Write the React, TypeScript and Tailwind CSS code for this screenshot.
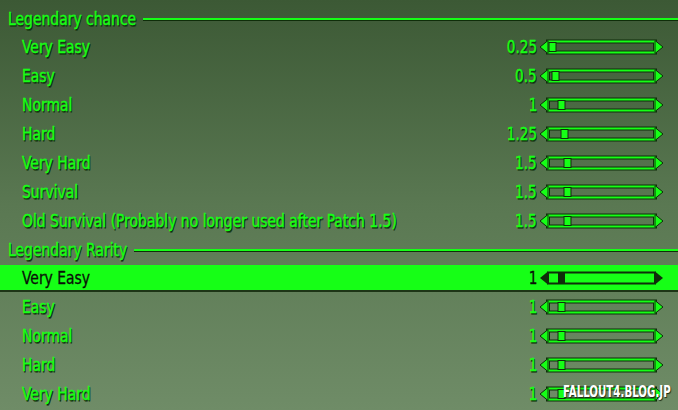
import React from 'react';

const G = '#16ff16';
const D = '#0f2d0a';

const chance: [string, number, string][] = [
  ['Very Easy', 0.25, '0.25'],
  ['Easy', 0.5, '0.5'],
  ['Normal', 1, '1'],
  ['Hard', 1.25, '1.25'],
  ['Very Hard', 1.5, '1.5'],
  ['Survival', 1.5, '1.5'],
  ['Old Survival (Probably no longer used after Patch 1.5)', 1.5, '1.5'],
];

const rarity: [string, number, string][] = [
  ['Very Easy', 1, '1'],
  ['Easy', 1, '1'],
  ['Normal', 1, '1'],
  ['Hard', 1, '1'],
  ['Very Hard', 1, '1'],
];

const Slider: React.FC<{ value: number; active?: boolean }> = ({ value, active }) => {
  const t = 8 + value * 12;
  if (active) {
    return (
      <svg width="130" height="18" viewBox="0 0 130 18" className="shrink-0">
        <polygon points="2,9 10,2.5 10,15.5" fill={D} />
        <rect x="10" y="3.5" width="107" height="11" fill={G} stroke={D} strokeWidth="2" />
        <polygon points="117,2.5 125,9 117,15.5" fill={D} />
        <rect x={t} y="3.5" width="7" height="11" fill={D} />
      </svg>
    );
  }
  return (
    <svg width="130" height="18" viewBox="0 0 130 18" className="shrink-0">
      <rect x="10" y="3.5" width="107" height="11" fill="none" stroke={D} strokeWidth="4" />
      <rect x="10" y="3.5" width="107" height="11" fill="none" stroke={G} strokeWidth="2" />
      <polygon points="2,9 10,2.5 10,15.5" fill={G} stroke={D} strokeWidth="1" />
      <polygon points="117,2.5 125,9 117,15.5" fill={G} stroke={D} strokeWidth="1" />
      <rect x={t} y="4.5" width="7" height="9" fill={G} stroke={D} strokeWidth="1" />
    </svg>
  );
};

const Row: React.FC<{ label: string; value: number; text: string; active?: boolean }> = ({ label, value, text, active }) => {
  const tone = active
    ? 'h-[27px] bg-[#16ff16] border-b-2 border-[#1d3516] text-[#0a0f08] [-webkit-text-stroke:0.3px_#0a0f08]'
    : 'h-[29px] text-[#16ff16] [-webkit-text-stroke:0.4px_#16ff16] [text-shadow:1px_1px_0_#0f2d0a,1px_2px_0_rgba(15,45,10,0.6)]';
  return (
    <div className={`flex items-center ${tone}`}>
      <span className="flex-1 pl-[22px] whitespace-nowrap">
        <span className="inline-block scale-x-[0.86] origin-left">{label}</span>
      </span>
      <span className="inline-block text-right scale-x-[0.84] origin-right">{text}</span>
      <span className="ml-[1px] mr-[10px] flex">
        <Slider value={value} active={active} />
      </span>
    </div>
  );
};

const Header: React.FC<{ title: string; w: string; h: string }> = ({ title, w, h }) => (
  <div className={`flex items-center ${h}`}>
    <span className={`pl-[8px] ${w} whitespace-nowrap text-[#16ff16] [-webkit-text-stroke:0.4px_#16ff16] [text-shadow:1px_1px_0_#0f2d0a,1px_2px_0_rgba(15,45,10,0.6)]`}>
      <span className="inline-block scale-x-[0.86] origin-left">{title}</span>
    </span>
    <div className="flex-1 ml-[8px] h-[2px] bg-[#16ff16] shadow-[0_1px_0_#0f2d0a]" />
  </div>
);

export default function App() {
  return (
    <div className="relative w-[678px] h-[410px] overflow-hidden bg-linear-to-b from-[#3c5935] via-[#5a7852] to-[#6f8c67] text-[18px] leading-none font-['DejaVu_Sans_Condensed','DejaVu_Sans',sans-serif]">
      <div className="flex flex-col pt-[5px]">
        <Header title="Legendary chance" w="w-[135px]" h="h-[27px]" />
        {chance.map(([l, v, t], i) => (
          <Row key={'c' + i} label={l} value={v} text={t} />
        ))}
        <Header title="Legendary Rarity" w="w-[126px]" h="h-[30px]" />
        {rarity.map(([l, v, t], i) => (
          <Row key={'r' + i} label={l} value={v} text={t} active={i === 0} />
        ))}
      </div>
      <div className="absolute left-[563px] top-[385px] whitespace-nowrap text-white font-bold text-[15px] [text-shadow:1px_1px_1px_#1a2a14]">
        <span className="inline-block scale-x-[0.76] origin-left">FALLOUT4.BLOG.JP</span>
      </div>
    </div>
  );
}
